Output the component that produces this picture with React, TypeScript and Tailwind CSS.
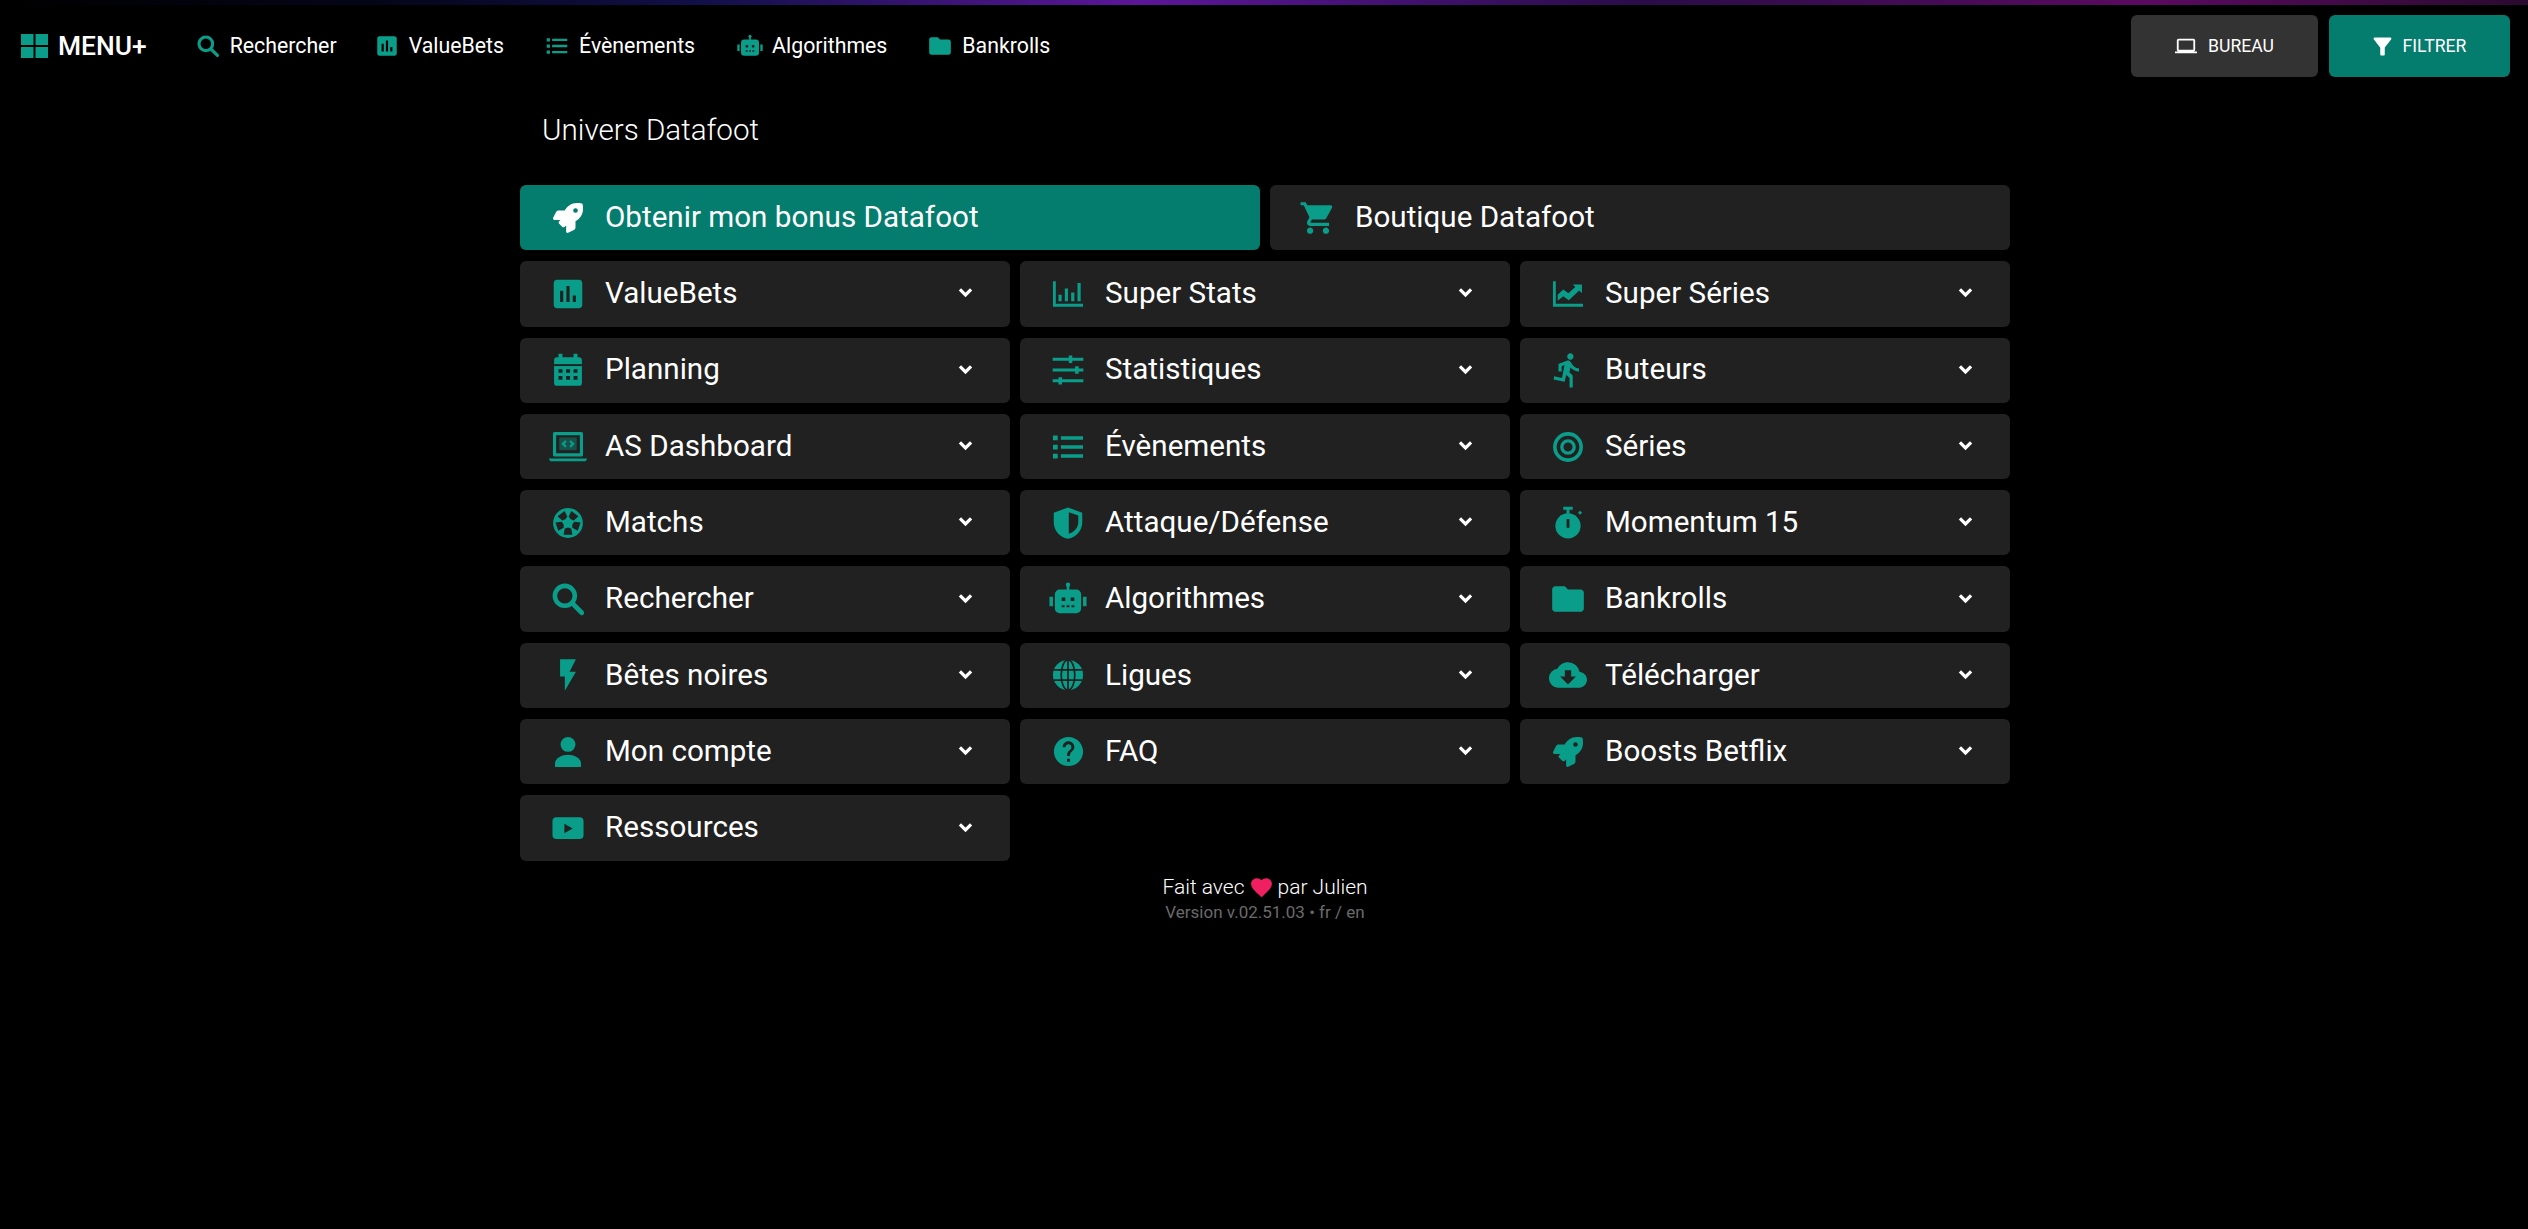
import React from "react";
import {
  MdAssessment,
  MdCloudDownload,
  MdDirectionsRun,
  MdFilterAlt,
  MdFlashOn,
  MdFolder,
  MdHelp,
  MdLaptop,
  MdShoppingCart,
} from "react-icons/md";
import { FaRocket } from "react-icons/fa";

type IconProps = { className?: string };

const Grid4 = ({ className }: IconProps) => (
  <svg viewBox="0 0 27 24" className={className} fill="currentColor">
    <path d="M0 0h12.500v11H0zM14.500 0H27v11H14.500zM0 13h12.500v11H0zM14.500 13H27v11H14.500z" />
  </svg>
);

const Search = ({ className }: IconProps) => (
  <svg viewBox="0 0 24 24" className={className} fill="none" stroke="currentColor">
    <circle cx="10" cy="10" r="6.300" strokeWidth="2.900" />
    <path d="M14.800 14.800l5.900 5.900" strokeWidth="3" strokeLinecap="round" />
  </svg>
);

const ListIcon = ({ className }: IconProps) => (
  <svg viewBox="0 0 24 24" className={className} fill="currentColor">
    <path d="M2.500 4.800h3v3h-3zM2.500 10.500h3v3h-3zM2.500 16.200h3v3h-3z" />
    <path d="M7.500 5.200h14v2.200h-14zM7.500 10.900h14v2.200h-14zM7.500 16.600h14v2.200h-14z" />
  </svg>
);

const BarsAxis = ({ className }: IconProps) => (
  <svg viewBox="0 0 24 24" className={className} fill="currentColor">
    <path d="M2.500 4h1.800v14.200h17.200V20h-19z" />
    <path d="M6 12.500h2v4H6zM10 8.500h2v8h-2zM14 11h2v5.500h-2zM18 5h2v11.500h-2z" />
  </svg>
);

const LineAxis = ({ className }: IconProps) => (
  <svg viewBox="0 0 24 24" className={className} fill="currentColor">
    <path d="M2.500 4h1.800v14.200h17.200V20h-19z" />
    <path d="M5.500 12.500l3.500-3.300 3.300 2.400 4.300-4.100-1.500-1.500h5.700v5.500l-1.700-1.700-6.600 6.100-3.500-2.500-3.500 2.800z" />
  </svg>
);

const Tune = ({ className }: IconProps) => (
  <svg viewBox="0 0 24 24" className={className} fill="currentColor">
    <path d="M2.300 4.200h19.400v2H2.300zM2.300 11h19.400v2H2.300zM2.300 17.800h19.400v2H2.300z" />
    <path d="M12.500 2.900h2.200v4.600h-2.200zM16.500 9.700h2.200v4.600h-2.200zM6 16.500h2.200v4.600H6z" />
  </svg>
);

const HalfShield = ({ className }: IconProps) => (
  <svg viewBox="0 0 24 24" className={className} fill="currentColor">
    <path
      fillRule="evenodd"
      d="M12 2.200L3 5.500v6c0 5.200 3.700 9.300 9 10.500 5.300-1.200 9-5.300 9-10.500v-6l-9-3.300zm.500 3v13.600c3.500-1.200 6-3.900 6-7.300V7.300l-6-2.100z"
    />
  </svg>
);

const Rings = ({ className }: IconProps) => (
  <svg viewBox="0 0 24 24" className={className} fill="none" stroke="currentColor">
    <circle cx="12" cy="12" r="8.300" strokeWidth="2.300" />
    <circle cx="12" cy="12" r="3.900" strokeWidth="2.100" />
  </svg>
);

const CodeLaptop = ({ className }: IconProps) => (
  <svg viewBox="0 0 24 24" className={className} fill="currentColor">
    <path
      fillRule="evenodd"
      d="M3.500 2.500h17a1 1 0 0 1 1 1V17a1 1 0 0 1-1 1h-17a1 1 0 0 1-1-1V3.500a1 1 0 0 1 1-1zm1 2V16h15V4.500z"
    />
    <path d="M0 19.200h24c0 1-.8 1.800-1.600 1.800H1.600C.8 21 0 20.200 0 19.200z" />
    <path d="M6.500 6h11v8h-11z" fillOpacity=".4" />
    <path d="M10.200 7.700l1 1-1.400 1.300 1.400 1.400-1 1-2.400-2.400zM13.800 7.700l-1 1 1.400 1.300-1.400 1.400 1 1 2.400-2.400z" />
  </svg>
);

const Calendar = ({ className }: IconProps) => (
  <svg viewBox="0 0 24 24" className={className} fill="currentColor">
    <path d="M6 1.800h2.500V4h7V1.800H18V4h.800a2 2 0 0 1 2 2v14a2 2 0 0 1-2 2H5.200a2 2 0 0 1-2-2V6a2 2 0 0 1 2-2H6z" />
    <g className="text-[#212121]" fill="currentColor">
      <path d="M3.200 8.300h17.600v1.200H3.200z" />
      <path d="M6 11.500h2.500v2.300H6zM10.800 11.500h2.500v2.300h-2.500zM15.500 11.500H18v2.300h-2.500zM6 15.800h2.500v2.300H6zM10.800 15.800h2.500v2.300h-2.500zM15.500 15.800H18v2.300h-2.500z" />
    </g>
  </svg>
);

const Soccer = ({ className }: IconProps) => (
  <svg viewBox="0 0 24 24" className={className}>
    <circle cx="12" cy="12" r="9.400" fill="currentColor" />
    <g className="text-[#212121]" fill="currentColor">
      {[36, 108, 180, 252, 324].map((a) => (
        <path key={a} d="M9.200 4.600h5.600l-.8 3.900-2 .6-2-.6z" transform={`rotate(${a} 12 12)`} />
      ))}
    </g>
  </svg>
);

const Robot = ({ className }: IconProps) => (
  <svg viewBox="0 0 24 24" className={className} fill="currentColor">
    <path d="M0.300 10.500h2.200v6H0.300zM21.500 10.500h2.200v6h-2.200z" />
    <circle cx="12" cy="3" r="1.400" />
    <path d="M11.200 3h1.600v3.500h-1.600z" />
    <rect x="3.700" y="6" width="16.600" height="15" rx="3" />
    <g className="text-[#212121]" fill="currentColor">
      <path d="M8 11h2.300v2.300H8zM13.700 11h2.300v2.300h-2.300zM8 16h1.800v1.200H8zM11.100 16h1.800v1.200h-1.800zM14.200 16H16v1.200h-1.800z" />
    </g>
  </svg>
);

const Globe = ({ className }: IconProps) => (
  <svg viewBox="0 0 24 24" className={className}>
    <circle cx="12" cy="12" r="9.500" fill="currentColor" />
    <g className="text-[#212121]" stroke="currentColor" fill="none" strokeWidth="1.100">
      <ellipse cx="12" cy="12" rx="4.300" ry="9.500" />
      <path d="M3 8.700h18M3 15.300h18M12 2.500v19" />
    </g>
  </svg>
);

const Person = ({ className }: IconProps) => (
  <svg viewBox="0 0 24 24" className={className} fill="currentColor">
    <circle cx="12" cy="7.200" r="4.700" />
    <path d="M3.800 21.500V19c0-3.100 4.800-5.200 8.200-5.200s8.200 2.100 8.200 5.200v2.500z" />
  </svg>
);

const Timer = ({ className }: IconProps) => (
  <svg viewBox="0 0 24 24" className={className} fill="currentColor">
    <path d="M9 1.800h6v1.800h-2.100v2.500h-1.800V3.600H9z" />
    <path d="M18.300 5.500l1.300-1.300 1.300 1.300-1.300 1.300z" />
    <circle cx="12" cy="13.800" r="8" />
    <path className="text-[#212121]" fill="currentColor" d="M11.100 9.500h1.800v5.500h-1.800z" />
  </svg>
);

const Video = ({ className }: IconProps) => (
  <svg viewBox="0 0 24 24" className={className} fill="currentColor">
    <rect x="2.200" y="5.200" width="19.600" height="13.800" rx="2.400" />
    <path className="text-[#212121]" fill="currentColor" d="M9.700 9.300l5.200 3-5.200 3z" />
  </svg>
);

const Chevron = ({ className }: IconProps) => (
  <svg viewBox="0 0 14 10" className={className} fill="none" stroke="currentColor">
    <path d="M1.800 2l5.200 5.200L12.200 2" strokeWidth="3" />
  </svg>
);

const topNav = [
  { label: "Rechercher", Icon: Search, margin: "mr-[37px]" },
  { label: "ValueBets", Icon: MdAssessment, margin: "mr-[40px]" },
  { label: "Évènements", Icon: ListIcon, margin: "mr-[42px]" },
  { label: "Algorithmes", Icon: Robot, margin: "mr-[40px]" },
  { label: "Bankrolls", Icon: MdFolder, margin: "" },
];

const items = [
  { label: "ValueBets", Icon: MdAssessment },
  { label: "Super Stats", Icon: BarsAxis },
  { label: "Super Séries", Icon: LineAxis },
  { label: "Planning", Icon: Calendar },
  { label: "Statistiques", Icon: Tune },
  { label: "Buteurs", Icon: MdDirectionsRun },
  { label: "AS Dashboard", Icon: CodeLaptop },
  { label: "Évènements", Icon: ListIcon },
  { label: "Séries", Icon: Rings },
  { label: "Matchs", Icon: Soccer },
  { label: "Attaque/Défense", Icon: HalfShield },
  { label: "Momentum 15", Icon: Timer },
  { label: "Rechercher", Icon: Search },
  { label: "Algorithmes", Icon: Robot },
  { label: "Bankrolls", Icon: MdFolder },
  { label: "Bêtes noires", Icon: MdFlashOn },
  { label: "Ligues", Icon: Globe },
  { label: "Télécharger", Icon: MdCloudDownload },
  { label: "Mon compte", Icon: Person },
  { label: "FAQ", Icon: MdHelp, size: "w-[35px] h-[35px]" },
  { label: "Boosts Betflix", Icon: FaRocket, size: "w-[30px] h-[30px]" },
  { label: "Ressources", Icon: Video },
];

const Card = ({ label, Icon, size = "w-full h-full", chevron = true, active = false }: any) => (
  <div
    className={`flex items-center h-[65.3px] rounded-[6px] pl-[29px] pr-[37px] text-white ${
      active ? "bg-[#047c6e]" : "bg-[#212121]"
    }`}
  >
    <span className={`flex items-center justify-center w-[38px] h-[38px] shrink-0 ${active ? "text-white" : "text-[#0a9e8a]"}`}>
      <Icon className={size} />
    </span>
    <span className="ml-[18px] text-[29.6px] leading-none flex-1">{label}</span>
    {chevron && <Chevron className="w-[15px] h-[11px] shrink-0 mb-[2px]" />}
  </div>
);

export default function App() {
  return (
    <div className="min-h-[1229px] bg-black text-white font-['Roboto',sans-serif]">
      <div className="h-[5px] bg-[linear-gradient(90deg,#000000_0%,#05051a_15%,#12104a_28%,#5c1699_45%,#2a0c48_65%,#5a0a60_85%,#2a0a30_100%)]" />
      <header className="flex items-center justify-between h-[74px] pl-[21px] pr-[18px] pt-[8px]">
        <nav className="flex items-center">
          <div className="flex items-center mr-[48px]">
            <Grid4 className="w-[27px] h-[24px] text-[#0a9e8a]" />
            <span className="ml-[10px] text-[26.4px] font-medium leading-none">MENU+</span>
          </div>
          {topNav.map(({ label, Icon, margin }) => (
            <div key={label} className={`flex items-center ${margin}`}>
              <Icon className="w-[26px] h-[26px] text-[#0a9e8a]" />
              <span className="ml-[9px] text-[21.3px] leading-none">{label}</span>
            </div>
          ))}
        </nav>
        <div className="flex items-center gap-[11px]">
          <button className="flex items-center justify-center w-[187px] h-[62px] rounded-[6px] bg-[#333333] text-[17.6px] gap-[11px]">
            <MdLaptop className="w-[22px] h-[22px]" />
            BUREAU
          </button>
          <button className="flex items-center justify-center w-[181px] h-[62px] rounded-[6px] bg-[#047c6e] text-[17.6px] gap-[7px] pr-[4px]">
            <MdFilterAlt className="w-[27px] h-[27px]" />
            FILTRER
          </button>
        </div>
      </header>
      <main className="ml-[520px] w-[1490px]">
        <h1 className="pl-[22px] pt-[31px] text-[29.6px] font-light leading-[40px]">Univers Datafoot</h1>
        <div className="mt-[35px] grid grid-cols-2 gap-x-[10px]">
          <Card label="Obtenir mon bonus Datafoot" Icon={FaRocket} size="w-[30px] h-[30px]" chevron={false} active />
          <Card label="Boutique Datafoot" Icon={MdShoppingCart} size="w-[40px] h-[40px]" chevron={false} />
        </div>
        <div className="mt-[11px] grid grid-cols-3 gap-x-[10px] gap-y-[11px]">
          {items.map((item) => (
            <Card key={item.label} {...item} />
          ))}
        </div>
        <footer className="mt-[14px] flex flex-col items-center">
          <div className="flex items-center text-[21px] font-light leading-[24px]">
            Fait avec
            <svg viewBox="0 0 24 24" className="mx-[4px] w-[25px] h-[25px] text-[#f01f62]" fill="currentColor">
              <path d="M12 21.350l-1.450-1.320C5.400 15.360 2 12.280 2 8.500 2 5.420 4.420 3 7.500 3c1.740 0 3.410.81 4.500 2.090C13.090 3.810 14.760 3 16.500 3 19.580 3 22 5.420 22 8.500c0 3.780-3.400 6.860-8.550 11.540L12 21.350z" />
            </svg>
            par Julien
          </div>
          <div className="mt-[2px] text-[17px] leading-[20px] text-[#6b6b6b]">Version v.02.51.03 • fr / en</div>
        </footer>
      </main>
    </div>
  );
}
